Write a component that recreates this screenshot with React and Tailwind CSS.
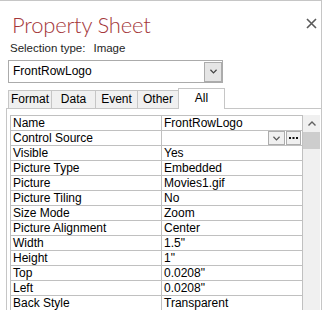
import React from 'react';

const rows = [
  ['Name', 'FrontRowLogo'],
  ['Control Source', ''],
  ['Visible', 'Yes'],
  ['Picture Type', 'Embedded'],
  ['Picture', 'Movies1.gif'],
  ['Picture Tiling', 'No'],
  ['Size Mode', 'Zoom'],
  ['Picture Alignment', 'Center'],
  ['Width', '1.5"'],
  ['Height', '1"'],
  ['Top', '0.0208"'],
  ['Left', '0.0208"'],
  ['Back Style', 'Transparent'],
];

const tabs = [
  { label: 'Format', w: 'w-[44px] border-l' },
  { label: 'Data', w: 'w-[44px]' },
  { label: 'Event', w: 'w-[42px]' },
  { label: 'Other', w: 'w-[40px] border-r-0' },
];

function Chevron({ up = false, className = '' }) {
  return (
    <svg viewBox="0 0 8 5" className={className} fill="none" stroke="currentColor" strokeWidth="1.4">
      {up ? <path d="M0.5 4.5 L4 1 L7.5 4.5" /> : <path d="M0.5 0.5 L4 4 L7.5 0.5" />}
    </svg>
  );
}

export default function App() {
  return (
    <div className="w-[323px] h-[310px] bg-white overflow-hidden text-black font-['Liberation_Sans',Arial,sans-serif]">
      <div className="w-[322px] h-[310px] border-t border-r border-[#c6c6c6] flex flex-col">
        {/* Header */}
        <div className="flex justify-between h-[39px] shrink-0">
          <h1 className="pl-[12px] pt-[12px] text-[22px] leading-[24px] font-light tracking-[-0.2px] text-[#a4373a] font-['Lato',sans-serif]">
            Property Sheet
          </h1>
          <button className="mt-[17px] mr-[4px] w-[11px] h-[11px] text-[#5a5a5a]">
            <svg viewBox="0 0 11 11" className="w-[11px] h-[11px]" stroke="currentColor" strokeWidth="1.6">
              <path d="M1 1 L10 10 M10 1 L1 10" />
            </svg>
          </button>
        </div>

        {/* Selection type */}
        <div className="flex h-[17px] pl-[10px] text-[11.5px] leading-[17px] text-[#1e1e1e] shrink-0">
          <span>Selection type:</span>
          <span className="ml-[8px]">Image</span>
        </div>

        {/* Combo */}
        <div className="mt-[3px] ml-[8px] w-[215px] h-[23px] border border-[#ababab] flex items-center shrink-0">
          <span className="pl-[4px] text-[12px] leading-[21px] flex-1">FrontRowLogo</span>
          <div className="w-[18px] h-[20px] border border-[#acacac] bg-[#e5e5e5] flex items-center justify-center text-[#444]">
            <Chevron className="w-[7px] h-[5px]" />
          </div>
        </div>

        {/* Tabs */}
        <div className="mt-[5px] ml-[8px] h-[20px] flex items-end shrink-0 text-[12px]">
          {tabs.map((t) => (
            <div
              key={t.label}
              className={`${t.w} h-[18px] border-t border-r border-[#c6c6c6] bg-[#f0f0f0] leading-[17px] text-center`}
            >
              {t.label}
            </div>
          ))}
          <div className="relative z-10 w-[47px] h-[21px] -mb-px border-l border-t border-r border-[#c6c6c6] bg-white leading-[18px] text-center">
            All
          </div>
        </div>

        {/* Panel */}
        <div className="ml-[6px] flex-1 border-l border-t border-[#c6c6c6] pl-[3px] pt-[6px] flex">
          <div className="w-[293px] border-l border-t border-r border-[#c0c0c0] text-[12px] leading-[14px]">
            {rows.map(([label, value], i) => (
              <div key={label} className="flex h-[15px] border-b border-[#c0c0c0]">
                <div className="w-[151px] border-r border-[#c0c0c0] pl-[2px] whitespace-nowrap overflow-hidden">
                  {label}
                </div>
                <div className="flex-1 pl-[2px] flex whitespace-nowrap">
                  <span className="flex-1">{value}</span>
                  {i === 1 && (
                    <div className="flex gap-[1px] pr-[1px]">
                      <div className="w-[17px] h-[14px] border border-[#adadad] bg-[#f0f0f0] flex items-center justify-center text-[#555]">
                        <Chevron className="w-[7px] h-[5px]" />
                      </div>
                      <div className="w-[15px] h-[14px] border border-[#adadad] bg-[#f0f0f0] flex items-center justify-center">
                        <svg viewBox="0 0 9 2" className="w-[9px] h-[2px]" fill="#111">
                          <rect x="0" y="0" width="2" height="2" />
                          <rect x="3.5" y="0" width="2" height="2" />
                          <rect x="7" y="0" width="2" height="2" />
                        </svg>
                      </div>
                    </div>
                  )}
                </div>
              </div>
            ))}
          </div>

          {/* Scrollbar */}
          <div className="w-[17px] bg-[#f0f0f0] flex flex-col">
            <div className="h-[17px] flex items-center justify-center text-[#606060]">
              <Chevron up className="w-[8px] h-[5px]" />
            </div>
            <div className="h-[17px] bg-[#cdcdcd]" />
          </div>
        </div>
      </div>
    </div>
  );
}
